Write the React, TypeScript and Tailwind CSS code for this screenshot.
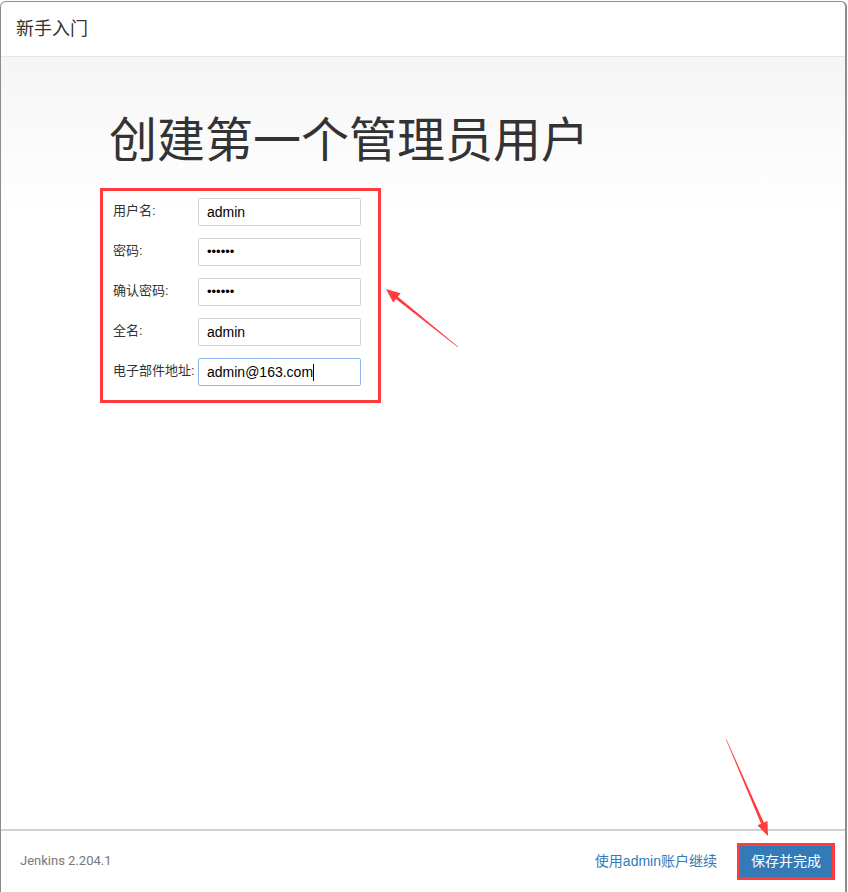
// Jenkins 新手入门 - 创建第一个管理员用户
const FONT = { fontFamily: '"Liberation Sans", Arial, "Noto Sans CJK SC", sans-serif' }

const fields = [
  { label: '用户名:', value: 'admin', type: 'text' },
  { label: '密码:', value: 'admin1', type: 'password' },
  { label: '确认密码:', value: 'admin1', type: 'password' },
  { label: '全名:', value: 'admin', type: 'text' },
  { label: '电子部件地址:', value: 'admin@163.com', type: 'text', focused: true },
]

function Arrows() {
  return (
    <svg className="absolute inset-0 pointer-events-none" width="848" height="892" viewBox="0 0 848 892">
      <polygon
        fill="#ff3d3d"
        points="458.19,346.77 397.84,296.63 400.67,293.13 386,289 393.13,302.47 395.96,298.97 457.81,347.23"
      />
      <polygon
        fill="#ff3d3d"
        points="725.72,739.12 761.06,823.75 757.39,825.33 768,836 767.49,820.97 763.82,822.55 726.28,738.88"
      />
    </svg>
  )
}

export default function App() {
  return (
    <div className="relative w-[848px] h-[892px] bg-white overflow-hidden" style={FONT}>
      <div className="mt-px w-[847px] h-[900px] flex flex-col border border-b-0 border-[#8c8c8c] border-r-2 rounded-t-md bg-white overflow-hidden">
        {/* 头部 */}
        <div className="h-[55px] flex items-center px-[15px] border-b border-[#e5e5e5]">
          <span className="text-[18px] text-[#333]">新手入门</span>
        </div>

        {/* 内容 */}
        <div className="h-[772px] bg-linear-to-b from-[#f5f5f5] to-white to-20% pt-[55px] pl-[99px]">
          <h1
            className="text-[48px] leading-none text-[#333] pl-[9px]"
            style={{ fontFamily: '"Noto Sans CJK SC", sans-serif' }}
          >
            创建第一个管理员用户
          </h1>

          <div className="mt-[28px] w-[281px] border-[3px] border-[#ff3b3b] pt-[7px] pb-[14px] pl-[10px] flex flex-col gap-[12px]">
            {fields.map((f) => (
              <div key={f.label} className="flex items-center">
                <label className="w-[85px] text-[13px] text-[#333] -mt-[3px]">{f.label}</label>
                <div
                  className={`w-[163px] h-[28px] flex items-center px-[8px] rounded-[2px] border bg-white text-[14px] text-black ${
                    f.focused ? 'border-[#8fb8f0]' : 'border-[#d4d4d4]'
                  }`}
                >
                  {f.type === 'password' ? (
                    <span className="text-[13px]">••••••</span>
                  ) : (
                    <span>{f.value}</span>
                  )}
                  {f.focused && <span className="w-px h-[17px] bg-black" />}
                </div>
              </div>
            ))}
          </div>
        </div>

        {/* 底部 */}
        <div className="h-[62px] flex items-center border-t-2 border-[#d0d0d0] pl-[19px] pr-[10px]">
          <span className="text-[13px] text-[#777]" style={{ fontFamily: 'Roboto, sans-serif' }}>
            Jenkins 2.204.1
          </span>
          <div className="ml-auto flex items-center gap-[20px]">
            <span className="text-[14px] text-[#337ab7]">使用admin账户继续</span>
            <div className="border-[3px] border-[#ff3b3b]">
              <div className="h-[31px] px-[11px] flex items-center bg-[#337ab7] text-white text-[14px]">
                保存并完成
              </div>
            </div>
          </div>
        </div>
      </div>
      <Arrows />
    </div>
  )
}
